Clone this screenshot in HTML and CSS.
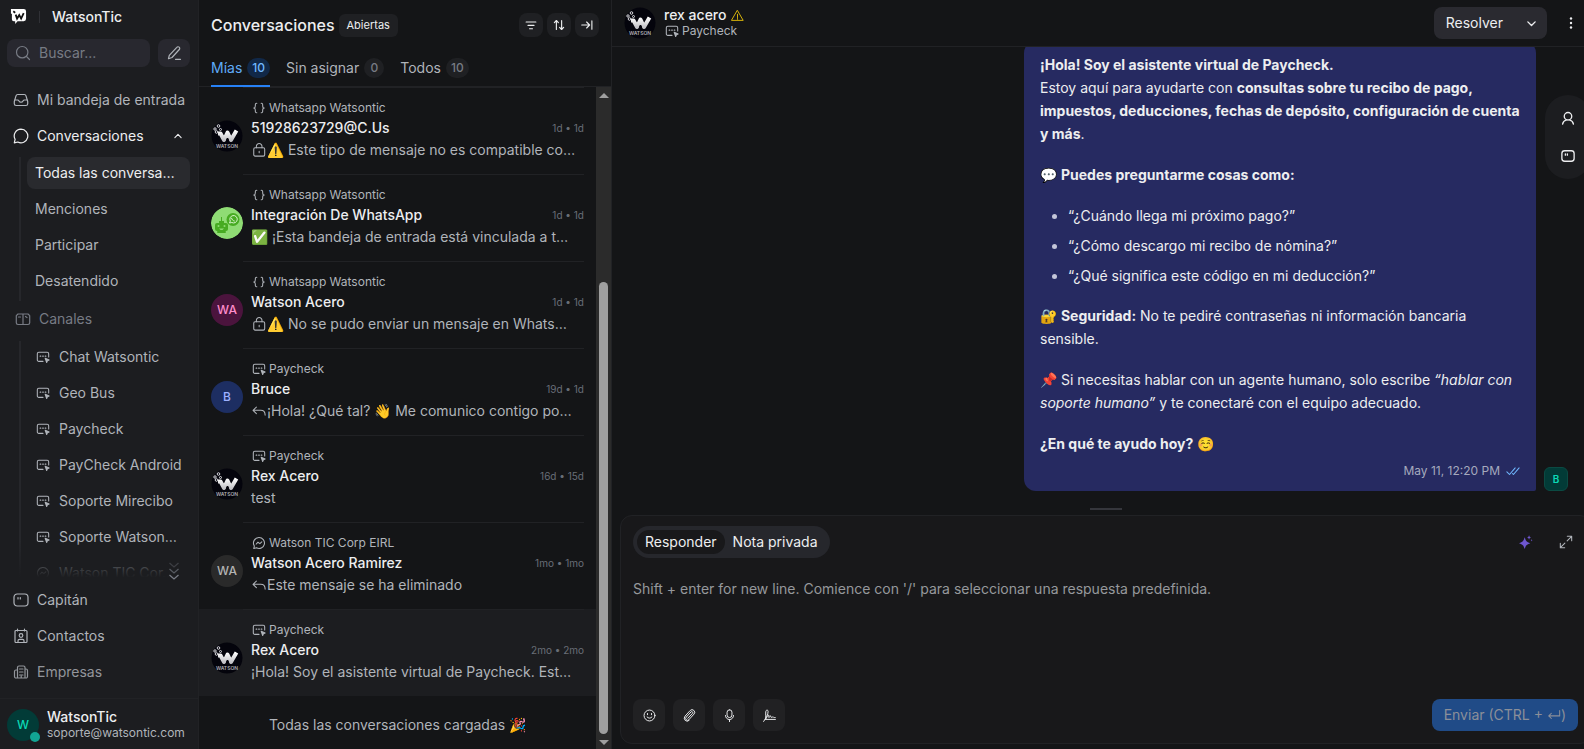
FILE: index.html
```html
<!DOCTYPE html>
<html lang="es">
<head>
<meta charset="utf-8">
<title>WatsonTic</title>
<link rel="stylesheet" href="styles.css">
</head>
<body>
<svg class="defs" aria-hidden="true">
  <linearGradient id="g-w" x1="0" y1="0" x2="0" y2="1"><stop offset="0" stop-color="#fff"/><stop offset="1" stop-color="#c4c4c8"/></linearGradient>
  <symbol id="i-web" viewBox="0 0 16 16"><path d="M8 13H3.200A1.700 1.700 0 0 1 1.500 11.300V4.200A1.700 1.700 0 0 1 3.200 2.500H12.800A1.700 1.700 0 0 1 14.500 4.200V8M4.700 7h.8M7.600 7h.8M10.500 7h.8"/><path d="M10.500 9.500l4.500 2-2 .8-.8 2z" fill="currentColor"/></symbol>
  <symbol id="i-msgr" viewBox="0 0 16 16"><path d="M8 1.800a6.200 6.200 0 1 1-2.800 11.700L2 14.300l.7-2.900A6.200 6.200 0 0 1 8 1.800zM4.800 9.200l2-2.100 2.200 1.600 2.200-2"/></symbol>
  <symbol id="i-api" viewBox="0 0 16 16"><path d="M5.500 2.500C3.600 2.500 3.800 4 3.800 5.300S3.500 8 2 8c1.500 0 1.800 1.400 1.800 2.700s-.2 2.800 1.700 2.800M10.500 2.500c1.900 0 1.700 1.500 1.700 2.800S12.500 8 14 8c-1.500 0-1.800 1.400-1.800 2.700s.2 2.800-1.700 2.800"/></symbol>
  <symbol id="i-lock" viewBox="0 0 16 16"><rect x="2" y="5.500" width="12.500" height="9.500" rx="1.500"/><path d="M5 5.500V3.800a3.200 3.200 0 0 1 6.400 0V5.500M8.200 9.500v1.500"/></symbol>
  <symbol id="i-reply" viewBox="0 0 16 16"><path d="M5 3.500L1.200 7.200 5 11M1.500 7.200H10c3.300 0 5 2 5 5.500"/></symbol>
  <symbol id="i-captain" viewBox="0 0 16 16"><rect x="1" y="2" width="14" height="12" rx="3.200"/><path d="M5 5.500v1.500M7.300 5.500v1.500"/></symbol>
  <symbol id="i-down" viewBox="0 0 16 16"><path d="M3.500 6L8 10.500 12.500 6"/></symbol>
  <symbol id="i-watson" viewBox="0 0 32 32"><circle cx="16" cy="16" r="15.500" fill="#04040c" stroke="none"/><path d="M7 13.500h2.500L13 20l3.500-7.500L20 20l5.500-9.500" fill="none" stroke="url(#g-w)" stroke-width="4" stroke-linejoin="round"/><circle cx="16.500" cy="19.500" r="1.300" fill="#04040c" stroke="none"/><g fill="none" stroke="#d6d6da" stroke-width="1"><circle cx="7.500" cy="6" r="1.300"/><circle cx="4" cy="9" r="1.200"/><circle cx="9.500" cy="9.500" r="1"/><circle cx="5.500" cy="12" r="1.300"/></g><text x="16" y="28" text-anchor="middle" font-size="5" font-weight="600" fill="#b0b0b4" stroke="none">WATSON</text></symbol>
</svg>
<div class="app">
  <aside class="sidebar">
    <div class="brand">
      <svg class="brand-logo" viewBox="0 0 18 18"><path d="M3 1h11.500A2.500 2.500 0 0 1 17 3.500v8a2.500 2.500 0 0 1-2.500 2.500H8l-2.500 3v-3H4a2 2 0 0 1-2-2V6H1V1z" fill="#fff"/><path d="M6 7l1.500 4.200 2.300-3.700 2 3.700L14.500 5.500M3.500 3.500l2 1.500" fill="none" stroke="#111" stroke-width="1.900"/></svg>
      <span class="brand-sep"></span>
      <span class="brand-name">WatsonTic</span>
    </div>
    <div class="search-row">
      <label class="search"><svg class="icon" viewBox="0 0 16 16"><circle cx="7.200" cy="7.200" r="5.700"/><path d="M11.500 11.500l3 3"/></svg><input type="search" placeholder="Buscar..." aria-label="Buscar"></label>
      <button class="compose" aria-label="Nueva conversación"><svg class="icon" viewBox="0 0 16 16"><path d="M10.800 2.300a1.600 1.600 0 0 1 2.500 2.200L6 12.500l-3.500 1.200.8-3.400zM9.500 14.300h5"/></svg></button>
    </div>
    <nav class="nav">
      <div class="nav-scroll">
        <a class="nav-item" href="#"><svg class="icon" viewBox="0 0 16 16"><path d="M1.300 9.500L3 3.800A1.800 1.800 0 0 1 4.700 2.500h6.600A1.800 1.800 0 0 1 13 3.800l1.700 5.700v2.200a1.800 1.800 0 0 1-1.800 1.800H3.100a1.800 1.800 0 0 1-1.800-1.800zM1.500 8H4.500c.8 0 1.200.4 1.500 1s.8 1.200 2 1.200 1.700-.6 2-1.200.7-1 1.500-1h3"/></svg><span>Mi bandeja de entrada</span></a>
        <a class="nav-item open" href="#"><svg class="icon" viewBox="0 0 16 16"><path d="M8 1.200a6.800 6.800 0 1 1-3.200 12.800L1.300 14.800l.8-3.500A6.800 6.800 0 0 1 8 1.200z"/></svg><span>Conversaciones</span><svg class="icon chev" viewBox="0 0 16 16"><path d="M3 10.500L8 5.500l5 5"/></svg></a>
        <div class="tree">
          <a class="sub active" href="#"><span>Todas las conversa…</span></a>
          <a class="sub" href="#"><span>Menciones</span></a>
          <a class="sub" href="#"><span>Participar</span></a>
          <a class="sub" href="#"><span>Desatendido</span></a>
        </div>
        <div class="group"><svg class="icon" viewBox="0 0 16 16"><path d="M8 13.500H3A1.700 1.700 0 0 1 1.300 11.800V4.700L3 3h10l1.700 1.700v7.100a1.700 1.700 0 0 1-1.700 1.700zM8 3v10.500M3.500 6h2M10.500 5.500l1.500 1"/></svg><span>Canales</span></div>
        <div class="tree">
          <a class="sub" href="#"><svg class="icon small"><use href="#i-web"/></svg><span>Chat Watsontic</span></a>
          <a class="sub" href="#"><svg class="icon small"><use href="#i-web"/></svg><span>Geo Bus</span></a>
          <a class="sub" href="#"><svg class="icon small"><use href="#i-web"/></svg><span>Paycheck</span></a>
          <a class="sub" href="#"><svg class="icon small"><use href="#i-web"/></svg><span>PayCheck Android</span></a>
          <a class="sub" href="#"><svg class="icon small"><use href="#i-web"/></svg><span>Soporte Mirecibo</span></a>
          <a class="sub" href="#"><svg class="icon small"><use href="#i-web"/></svg><span>Soporte Watson…</span></a>
          <a class="sub" href="#"><svg class="icon small"><use href="#i-msgr"/></svg><span>Watson TIC Cor…</span></a>
        </div>
        <div class="fade"><svg viewBox="0 0 12 18"><path d="M1.500 1L6 5l4.500-4" opacity=".35"/><path d="M1.500 7L6 11l4.500-4" opacity=".65"/><path d="M1.500 13L6 17l4.500-4"/></svg></div>
      </div>
      <div class="nav-rest">
        <a class="nav-item" href="#"><svg class="icon"><use href="#i-captain"/></svg><span>Capitán</span></a>
        <a class="nav-item" href="#"><svg class="icon" viewBox="0 0 16 16"><rect x="2" y="2.500" width="12" height="12" rx="1"/><path d="M4.500 1v2M11.500 1v2M5 14.300v-1.500a1.500 1.500 0 0 1 1.500-1.500h3A1.500 1.500 0 0 1 11 12.800v1.500"/><circle cx="8" cy="7.500" r="1.800"/></svg><span>Contactos</span></a>
        <a class="nav-item dim" href="#"><svg class="icon" viewBox="0 0 16 16"><path d="M4.500 14V3.500A1.500 1.500 0 0 1 6 2h4.500A1.500 1.500 0 0 1 12 3.500V14M4.500 6H3A1.500 1.500 0 0 0 1.500 7.500v5A1.500 1.500 0 0 0 3 14h10a1.500 1.500 0 0 0 1.500-1.500v-6A1.500 1.500 0 0 0 13 5h-1M6.500 5h3.500M6.500 8h3.500M6.500 11h3.500M8.200 12v2"/></svg><span>Empresas</span></a>
      </div>
    </nav>
    <button class="profile">
      <span class="avatar teal">W<i class="online"></i></span>
      <span class="profile-text"><b>WatsonTic</b><span>soporte@watsontic.com</span></span>
    </button>
  </aside>

  <section class="list">
    <header class="list-head">
      <h1>Conversaciones</h1><span class="status">Abiertas</span>
      <div class="list-actions">
        <button aria-label="Filtrar"><svg class="icon" viewBox="0 0 16 16"><path d="M1.500 4h13M4 8.500h8M6 13h4"/></svg></button>
        <button aria-label="Ordenar"><svg class="icon" viewBox="0 0 16 16"><path d="M4.500 14V2M1.800 4.800L4.500 2l2.700 2.800M11.500 2v12M8.800 11.200l2.700 2.800 2.700-2.800"/></svg></button>
        <button aria-label="Expandir"><svg class="icon" viewBox="0 0 16 16"><path d="M1 8h10.500M7.500 4l4 4-4 4M14.500 2.500v11"/></svg></button>
      </div>
    </header>
    <div class="tabs">
      <button class="tab on">Mías<span>10</span></button>
      <button class="tab">Sin asignar<span>0</span></button>
      <button class="tab">Todos<span>10</span></button>
    </div>
    <div class="list-body">
      <div class="cards">
        <article class="card">
          <svg class="avatar"><use href="#i-watson"/></svg>
          <div class="card-main">
            <div class="inbox"><svg class="icon tiny"><use href="#i-api"/></svg>Whatsapp Watsontic</div>
            <div class="who"><h2>51928623729@C.Us</h2><time>1d • 1d</time></div>
            <p><svg class="icon msg"><use href="#i-lock"/></svg>⚠️ Este tipo de mensaje no es compatible co…</p>
          </div>
        </article>
        <article class="card">
          <svg class="avatar" viewBox="0 0 32 32"><circle cx="16" cy="16" r="16" fill="#8fdc74"/><g fill="#47ab22"><rect x="4" y="16" width="13" height="8" rx="2"/><rect x="8" y="14" width="5" height="3"/><rect x="6" y="24" width="9" height="2" rx="1"/><path d="M10 10h1v5h-1z"/><circle cx="22" cy="12.500" r="6.500"/></g><g fill="#8fdc74"><circle cx="7.500" cy="19" r="1"/><circle cx="13.500" cy="19" r="1"/><path d="M8 21.500h5l-1.500 1.500h-2z"/></g><path d="M18.500 16l.8-2a3.700 3.700 0 1 1 1.500 1.500zM20.500 10.800c.3 1.800 1.400 2.900 3.200 3.300" fill="none" stroke="#d8f5cc"/></svg>
          <div class="card-main">
            <div class="inbox"><svg class="icon tiny"><use href="#i-api"/></svg>Whatsapp Watsontic</div>
            <div class="who"><h2>Integración De WhatsApp</h2><time>1d • 1d</time></div>
            <p>✅ ¡Esta bandeja de entrada está vinculada a t…</p>
          </div>
        </article>
        <article class="card">
          <span class="avatar pink">WA</span>
          <div class="card-main">
            <div class="inbox"><svg class="icon tiny"><use href="#i-api"/></svg>Whatsapp Watsontic</div>
            <div class="who"><h2>Watson Acero</h2><time>1d • 1d</time></div>
            <p><svg class="icon msg"><use href="#i-lock"/></svg>⚠️ No se pudo enviar un mensaje en Whats…</p>
          </div>
        </article>
        <article class="card">
          <span class="avatar blue">B</span>
          <div class="card-main">
            <div class="inbox"><svg class="icon tiny"><use href="#i-web"/></svg>Paycheck</div>
            <div class="who"><h2>Bruce</h2><time>19d • 1d</time></div>
            <p><svg class="icon msg"><use href="#i-reply"/></svg>¡Hola! ¿Qué tal? 👋 Me comunico contigo po…</p>
          </div>
        </article>
        <article class="card">
          <svg class="avatar"><use href="#i-watson"/></svg>
          <div class="card-main">
            <div class="inbox"><svg class="icon tiny"><use href="#i-web"/></svg>Paycheck</div>
            <div class="who"><h2>Rex Acero</h2><time>16d • 15d</time></div>
            <p>test</p>
          </div>
        </article>
        <article class="card">
          <span class="avatar gray">WA</span>
          <div class="card-main">
            <div class="inbox"><svg class="icon tiny"><use href="#i-msgr"/></svg>Watson TIC Corp EIRL</div>
            <div class="who"><h2>Watson Acero Ramirez</h2><time>1mo • 1mo</time></div>
            <p><svg class="icon msg"><use href="#i-reply"/></svg>Este mensaje se ha eliminado</p>
          </div>
        </article>
        <article class="card selected">
          <svg class="avatar"><use href="#i-watson"/></svg>
          <div class="card-main">
            <div class="inbox"><svg class="icon tiny"><use href="#i-web"/></svg>Paycheck</div>
            <div class="who"><h2>Rex Acero</h2><time>2mo • 2mo</time></div>
            <p>¡Hola! Soy el asistente virtual de Paycheck. Est…</p>
          </div>
        </article>
        <p class="loaded">Todas las conversaciones cargadas 🎉</p>
      </div>
      <div class="scroll" aria-hidden="true"><i class="up"></i><i class="thumb"></i><i class="dn"></i></div>
    </div>
  </section>

  <main class="chat">
    <header class="chat-head">
      <svg class="avatar"><use href="#i-watson"/></svg>
      <div class="chat-who">
        <h2>rex acero <svg class="icon warn" viewBox="0 0 16 16"><path d="M8 2L15 14H1zM8 6.500v4M8 11.700v1"/></svg></h2>
        <div class="inbox"><svg class="icon tiny"><use href="#i-web"/></svg>Paycheck</div>
      </div>
      <div class="resolve"><button>Resolver</button><button class="more" aria-label="Más acciones"><svg class="icon"><use href="#i-down"/></svg></button></div>
      <button class="kebab" aria-label="Opciones"><svg viewBox="0 0 4 12"><circle cx="2" cy="1.500" r="1.200"/><circle cx="2" cy="6" r="1.200"/><circle cx="2" cy="10.500" r="1.200"/></svg></button>
    </header>
    <div class="messages">
      <div class="bubble">
        <p><strong>¡Hola! Soy el asistente virtual de Paycheck.</strong><br>Estoy aquí para ayudarte con <strong>consultas sobre tu recibo de pago, impuestos, deducciones, fechas de depósito, configuración de cuenta y más</strong>.</p>
        <p>💬 <strong>Puedes preguntarme cosas como:</strong></p>
        <ul><li>“¿Cuándo llega mi próximo pago?”</li><li>“¿Cómo descargo mi recibo de nómina?”</li><li>“¿Qué significa este código en mi deducción?”</li></ul>
        <p>🔐 <strong>Seguridad:</strong> No te pediré contraseñas ni información bancaria sensible.</p>
        <p>📌 Si necesitas hablar con un agente humano, solo escribe <em>“hablar con soporte humano”</em> y te conectaré con el equipo adecuado.</p>
        <p><strong>¿En qué te ayudo hoy?</strong> ☺️</p>
        <div class="meta">May 11, 12:20 PM <svg class="icon read" viewBox="0 0 16 16"><path d="M1 9l3 3 6.500-7.500M7.500 11l1 1L15 4.500"/></svg></div>
      </div>
      <span class="bot">B</span>
      <div class="pill">
        <button aria-label="Contacto"><svg class="icon small" viewBox="0 0 16 16"><circle cx="8" cy="6" r="4.300"/><path d="M1.800 15c.5-2.700 2.300-4.200 4.500-4.800M14.200 15c-.5-2.700-2.300-4.200-4.500-4.800"/></svg></button>
        <button aria-label="Capitán"><svg class="icon small"><use href="#i-captain"/></svg></button>
      </div>
    </div>
    <div class="dock">
      <div class="handle"></div>
      <form class="composer">
        <div class="composer-top">
          <div class="modes"><button type="button" class="on">Responder</button><button type="button">Nota privada</button></div>
          <button type="button" class="ghost ai" aria-label="Asistente"><svg viewBox="0 0 16 16"><path d="M6.500 2.500C8 7 8.500 7.800 13 9.300 8.500 10.800 8 11.500 6.500 16 5 11.500 4.500 10.800 0 9.300 4.500 7.800 5 7 6.500 2.500zM11.500 0c.3 1.900.8 2.500 2.500 2.800-1.700.3-2.200.9-2.500 2.700-.3-1.800-.8-2.400-2.500-2.700 1.700-.3 2.200-.9 2.500-2.800zM14.500 4.500c.1 1 .5 1.400 1.500 1.500-1 .1-1.400.5-1.500 1.500-.1-1-.5-1.400-1.500-1.500 1-.1 1.400-.5 1.500-1.500z"/></svg></button>
          <button type="button" class="ghost" aria-label="Ampliar"><svg class="icon small" viewBox="0 0 16 16"><path d="M9.500 1.500h5v5M14.200 1.800L9.300 6.700M6.500 14.500h-5v-5M1.800 14.200l4.900-4.900"/></svg></button>
        </div>
        <textarea aria-label="Mensaje" placeholder="Shift + enter for new line. Comience con '/' para seleccionar una respuesta predefinida."></textarea>
        <div class="composer-bottom">
          <button type="button" class="tool" aria-label="Emoji"><svg class="icon" viewBox="0 0 16 16"><circle cx="8" cy="8" r="6.700"/><path d="M5 9.800c1.500 2 4.500 2 6 0M5.500 5.500v1.500M10.500 5.500v1.500"/></svg></button>
          <button type="button" class="tool" aria-label="Adjuntar"><svg class="icon" viewBox="0 0 16 16"><path d="M6 11.500l5.700-6.200a1.200 1.200 0 0 0-1.800-1.700L4 10a2.200 2.200 0 0 0 3.200 3.200l6.300-6.900A3.200 3.200 0 0 0 8.800 1.900L2.600 8.700a4 4 0 0 0 0 5.200 3.500 3.500 0 0 0 5 .1"/></svg></button>
          <button type="button" class="tool" aria-label="Grabar"><svg class="icon" viewBox="0 0 16 16"><rect x="5" y="1" width="6" height="9.500" rx="3"/><path d="M3 8a5 5 0 0 0 10 0M8 13v2.500"/></svg></button>
          <button type="button" class="tool" aria-label="Firma"><svg class="icon" viewBox="0 0 16 16"><path d="M.8 15.300C3 12 6.500 6.500 6.300 3 6.100.6 3.800.6 3.400 3.500c-.4 3 .1 5.500.1 8.500C5 10 6 7 7 7.500S6 10.500 7.200 10.500s1-2 2-2 .3 2 1.200 2 1-1 1.800-.8.500 1 2.800.8M2.500 12.800H15.300"/></svg></button>
          <button type="submit" class="send" disabled>Enviar (CTRL + <svg class="icon enter" viewBox="0 0 16 16"><path d="M14.500 3v6H2M5 6L2 9l3 3"/></svg>)</button>
        </div>
      </form>
    </div>
  </main>
</div>
</body>
</html>
```
FILE: styles.css
```css
* { box-sizing: border-box; margin: 0; padding: 0; }
html, body { height: 100%; }
body { background: #141517; color: #edeef0; font: 14px/20px Inter, "Noto Sans", sans-serif; overflow: hidden; }
button, input, textarea { font: inherit; color: inherit; background: none; border: 0; outline: 0; }
a { color: inherit; text-decoration: none; }
.defs { position: absolute; width: 0; height: 0; }
.icon { width: 16px; height: 16px; flex: none; fill: none; stroke: currentColor; stroke-width: 1.2; stroke-linecap: round; stroke-linejoin: round; }
.icon.small, .icon.tiny { width: 14px; height: 14px; }
.app { display: flex; height: 100vh; }

.sidebar { width: 199px; flex: none; display: flex; flex-direction: column; background: #1c1d20; border-right: 1px solid #212225; color: #b0b4ba; }
.brand { display: flex; align-items: center; gap: 12px; height: 33px; padding-left: 10px; }
.brand-logo { width: 17px; height: 17px; }
.brand-sep { width: 1px; height: 12px; background: #303136; }
.brand-name { color: #edeef0; font-weight: 500; }
.search-row { display: flex; gap: 8px; padding: 6px 8px 0 7px; }
.search { flex: 1; min-width: 0; height: 28px; display: flex; align-items: center; gap: 8px; padding-left: 8px; border-radius: 8px; background: #28282f; color: #777b84; }
.search input { flex: 1; min-width: 0; }
.search input::placeholder { color: #777b84; }
.compose { width: 32px; height: 28px; display: grid; place-items: center; border-radius: 8px; background: #28282f; }
.nav { flex: 1; min-height: 0; display: flex; flex-direction: column; padding: 17px 8px 0 7px; }
.nav-scroll { flex: 1; min-height: 0; overflow: hidden; position: relative; }
.nav-item { display: flex; align-items: center; gap: 8px; height: 32px; padding: 0 6px; margin-bottom: 4px; white-space: nowrap; }
.nav-item.open { color: #edeef0; }
.nav-item.dim { opacity: .8; }
.chev { width: 10px; height: 10px; margin-left: auto; margin-right: 1px; stroke-width: 1.8; }
.tree { display: flex; flex-direction: column; gap: 4px; margin: 5px 0 0 12px; padding: 0 0 4px 6px; border-left: 2px solid #26272b; }
.group + .tree { margin-top: 4px; }
.sub { display: flex; flex: none; align-items: center; gap: 9px; height: 32px; padding: 0 8px; border-radius: 8px; white-space: nowrap; }
.sub .icon { margin-left: 1px; }
.sub.active { background: #292a2e; color: #edeef0; }
.group { display: flex; align-items: center; gap: 8px; height: 36px; padding-left: 8px; color: #777b84; }
.fade { position: absolute; inset: auto 0 0 0; height: 44px; display: flex; justify-content: flex-end; align-items: flex-end; padding: 0 10px 4px; background: linear-gradient(transparent, #1c1d20 85%); }
.fade svg { width: 12px; height: 18px; fill: none; stroke: #777b84; stroke-width: 1.3; }
.nav-rest { padding-bottom: 6px; }
.profile { display: flex; align-items: center; gap: 8px; height: 51px; padding: 3px 7px 1px; border-top: 1px solid #212225; text-align: left; }
.profile-text { display: flex; flex-direction: column; font-size: 12px; line-height: 16px; }
.profile-text b { color: #edeef0; font-size: 14px; font-weight: 500; }

.avatar { position: relative; width: 32px; height: 32px; flex: none; display: grid; place-items: center; border-radius: 50%; font-size: 12px; font-weight: 500; }
.teal { background: #023b37; color: #0bd8b6; }
.pink { background: #4b143d; color: #ff8dcc; }
.blue { background: #1d2e62; color: #9eb1ff; }
.gray { background: #2a2a2a; color: #b4b4b4; }
.online { position: absolute; right: -1px; bottom: -1px; width: 10px; height: 10px; border-radius: 50%; background: #12a594; }

.list { width: 413px; flex: none; display: flex; flex-direction: column; border-right: 1px solid #212225; }
.list-head { display: flex; align-items: center; height: 50px; padding: 0 12px; }
h1 { font-size: 16px; line-height: 24px; font-weight: 500; }
.status { margin-left: 4px; padding: 3px 8px; border-radius: 6px; background: #1f2023; font-size: 11px; line-height: 17px; }
.list-actions { display: flex; gap: 4px; margin-left: auto; }
.list-actions button { width: 24px; height: 24px; display: grid; place-items: center; border-radius: 8px; background: #1f2023; }
.list-actions .icon { width: 12px; height: 12px; stroke-width: 1.5; }
.tabs { display: flex; gap: 16px; height: 37px; padding-left: 12px; border-bottom: 1px solid #212225; }
.tab { display: flex; align-items: center; gap: 5px; height: 37px; border-bottom: 2px solid transparent; color: #b0b4ba; }
.tab span { min-width: 20px; padding: 0 5px; border-radius: 10px; background: #1f2023; color: #777b84; font-size: 12px; font-weight: 500; }
.tab.on { border-color: #2781f6; color: #5fabf7; }
.tab.on span { background: #112848; color: #70b8ff; }
.list-body { flex: 1; min-height: 0; display: flex; }
.cards { flex: 1; min-width: 0; overflow: hidden; }
.card { display: flex; height: 87px; padding-left: 12px; }
.card > .avatar { margin-top: 33px; }
.card-main { flex: 1; min-width: 0; margin-right: 12px; padding: 12px 0 0 8px; border-top: 1px solid #212225; }
.card.selected { background: #1c1d20; }
.inbox { display: flex; align-items: center; gap: 3px; padding-left: 1px; color: #b0b4ba; font-size: 12px; line-height: 16px; }
.who { display: flex; align-items: center; justify-content: space-between; height: 24px; }
h2 { font-size: 14px; line-height: 20px; font-weight: 500; }
time { color: #696e77; font-size: 10px; }
.card p { color: #b0b4ba; white-space: nowrap; }
.icon.msg { width: 14px; height: 14px; margin: 0 1px; vertical-align: -2px; }
.loaded { padding: 19px 0; text-align: center; color: #b0b4ba; }
.scroll { width: 15px; flex: none; display: flex; flex-direction: column; align-items: center; background: #2b2b2b; padding: 6px 0 4px; }
.up, .dn { border: 5px solid transparent; border-top: 0; border-bottom-color: #9f9f9f; }
.dn { border-top: 5px solid #9f9f9f; border-bottom: 0; margin-top: 6px; }
.thumb { flex: 1; width: 9px; margin-top: 184px; border-radius: 5px; background: #9f9f9f; }

.chat { flex: 1; min-width: 0; display: flex; flex-direction: column; overflow: hidden; }
.chat-head { display: flex; align-items: center; height: 47px; flex: none; padding: 0 5px 0 12px; border-bottom: 1px solid #212225; }
.chat-who { margin: 0 auto 0 8px; }
.chat-who h2 { display: flex; align-items: center; gap: 5px; line-height: 16px; }
.warn { width: 13px; height: 13px; color: #d9b50b; }
.resolve { display: flex; border-radius: 8px; background: #2a2a30; }
.resolve button { height: 32px; padding: 0 12px; }
.resolve .more { display: grid; place-items: center; width: 32px; padding: 0; }
.more .icon { width: 13px; height: 13px; stroke-width: 1.7; }
.kebab { display: grid; place-items: center; width: 16px; height: 32px; margin-left: 16px; }
.kebab svg { width: 4px; height: 12px; fill: #edeef0; }
.messages { flex: 1; min-height: 0; position: relative; display: flex; justify-content: flex-end; align-items: flex-end; gap: 8px; overflow: hidden; padding: 0 16px 0 12px; }
.bubble { width: 512px; padding: 12px 16px; border-radius: 12px 12px 2px 12px; background: #262a61; line-height: 23px; }
.bubble p { margin-bottom: 18px; }
.bubble ul { margin-bottom: 17px; padding-left: 28px; }
.bubble li + li { margin-top: 7px; }
.bubble li::marker { color: #c3c5d8; }
.bubble strong { font-weight: 700; }
.bubble p:last-of-type { margin-bottom: 8px; }
.meta { display: flex; justify-content: flex-end; align-items: center; gap: 6px; color: #a5a9bd; font-size: 12px; line-height: 16px; }
.read { width: 14px; height: 14px; color: #70b8ff; }
.bot { display: grid; place-items: center; width: 24px; height: 24px; border: 1px solid #0b4a43; border-radius: 6px; background: #023b37; color: #0bd8b6; font-size: 10px; font-weight: 600; }
.pill { position: absolute; right: -7px; top: 48px; display: flex; flex-direction: column; gap: 6px; padding: 7px; border-radius: 24px; background: #1c1d20; }
.pill button { display: grid; place-items: center; width: 32px; height: 32px; }
.pill .icon { stroke-width: 1.5; }
.dock { flex: none; margin-right: -16px; }
.handle { width: 32px; height: 2px; margin: 17px auto 5px; background: #35363c; }
.composer { display: flex; flex-direction: column; height: 229px; margin: 0 8px 5px; padding: 10px 13px 12px 12px; border: 1px solid #212225; border-radius: 12px; background: #18181a; }
.composer-top { display: flex; align-items: center; margin-right: -4px; }
.modes { display: flex; margin-right: auto; padding: 4px; border-radius: 16px; background: #26272c; }
.modes button { height: 24px; padding: 0 8px; border-radius: 12px; }
.modes .on { background: #18181a; }
.ghost { display: grid; place-items: center; width: 32px; height: 32px; margin-left: 8px; color: #b0b4ba; }
.ai svg { width: 14px; height: 14px; fill: #6e56cf; }
textarea { flex: 1; width: 100%; margin-top: 21px; resize: none; }
textarea::placeholder { color: #96989c; }
.composer-bottom { display: flex; gap: 8px; }
.tool { display: grid; place-items: center; width: 32px; height: 32px; border-radius: 8px; background: #212123; }
.tool .icon { width: 13px; height: 13px; }
.send { display: flex; align-items: center; height: 32px; margin-left: auto; padding: 0 12px; border-radius: 8px; background: #204b87; color: #8b8f99; white-space: pre; }
.enter { width: 14px; height: 14px; }
```
